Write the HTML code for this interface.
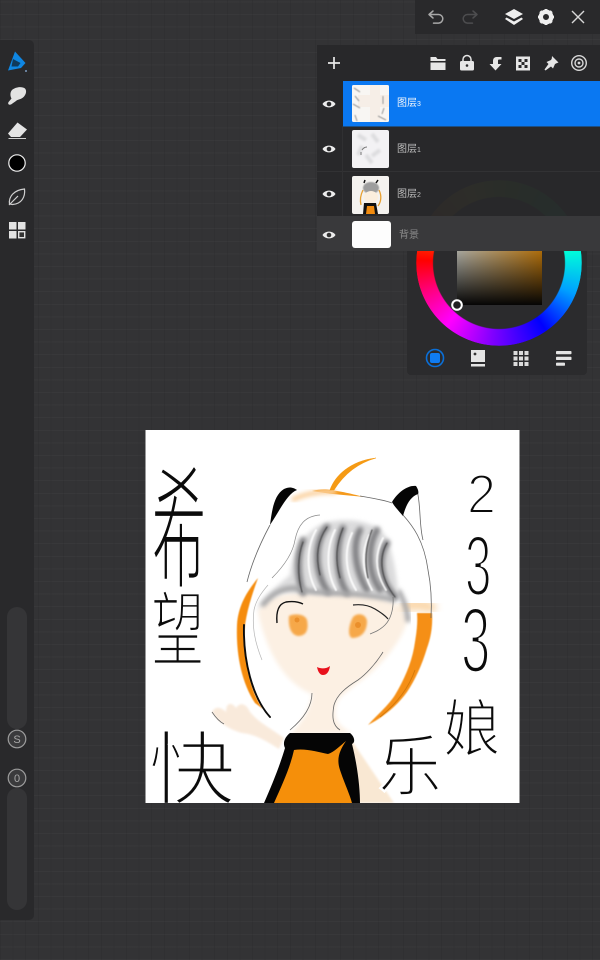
<!DOCTYPE html>
<html><head><meta charset="utf-8">
<style>
html,body{margin:0;padding:0;background:#333335}
#p{position:relative;width:600px;height:960px;overflow:hidden;background:#333335;font-family:"Liberation Sans","Noto Sans CJK SC",sans-serif}
#p>*{position:absolute}
.grid{inset:0;background-image:repeating-linear-gradient(0deg,rgba(255,255,255,.022) 0 1px,transparent 1px 12.6px),repeating-linear-gradient(90deg,rgba(0,0,0,.06) 0 1px,transparent 1px 12.6px)}
.wheel{left:416px;top:180px;width:166px;height:166px;border-radius:50%;background:conic-gradient(from 0deg,#7dff00 0deg,#00ff60 40deg,#00ffd8 80deg,#00a0ff 112deg,#0000ff 145deg,#8000ff 185deg,#ff00ff 220deg,#ff0080 248deg,#ff0000 272deg,#ff9000 310deg,#ffe000 335deg,#7dff00 360deg);-webkit-mask:radial-gradient(circle,transparent 0 65.5px,#000 66.5px 82.5px,transparent 83px);mask:radial-gradient(circle,transparent 0 65.5px,#000 66.5px 82.5px,transparent 83px)}
.lbl{color:#bdbdbd;font-size:10px;line-height:12px;white-space:nowrap}
.lbl small{font-size:7px}
</style></head><body>
<div id="p">
<div class="grid"></div>

<!-- sidebar -->
<div style="left:0;top:40px;width:34px;height:880px;background:#29292b;border-radius:0 5px 5px 0"></div>
<div style="left:7px;top:607px;width:20px;height:122px;background:#353537;border-radius:10px"></div>
<div style="left:7px;top:788px;width:20px;height:122px;background:#353537;border-radius:10px"></div>

<!-- colour panel -->
<div style="left:407px;top:170px;width:180px;height:205px;background:#2b2b2d;border-radius:4px"></div>
<div class="wheel"></div>
<div style="left:457px;top:250px;width:84.5px;height:55px;background:linear-gradient(to top,#050505,rgba(5,5,5,0)),linear-gradient(to right,#a9a9a1,#b06e0a)"></div>

<svg style="left:0;top:0" width="600" height="960" viewBox="0 0 600 960">
  <defs>
    <filter id="b05" x="-20%" y="-20%" width="140%" height="140%"><feGaussianBlur stdDeviation=".5"/></filter>
    <filter id="b1" x="-20%" y="-20%" width="140%" height="140%"><feGaussianBlur stdDeviation="1"/></filter>
    <filter id="b2" x="-30%" y="-30%" width="160%" height="160%"><feGaussianBlur stdDeviation="2.2"/></filter>
    <filter id="b4" x="-30%" y="-30%" width="160%" height="160%"><feGaussianBlur stdDeviation="4"/></filter>
    <clipPath id="cv"><rect x="145.5" y="430" width="374" height="373"/></clipPath>
  </defs>

  <!-- colour panel tabs -->
  <circle cx="457" cy="305" r="4.8" fill="#222" stroke="#fff" stroke-width="2"/>
  <circle cx="435" cy="358" r="8.5" fill="none" stroke="#0a6fd8" stroke-width="1.6"/>
  <rect x="430" y="353" width="10" height="10" rx="2" fill="#0f7cf2"/>
  <path d="M471 350h14v12h-14zM471 364h14v2.500h-14z" fill="#e4e4e4"/>
  <circle cx="475" cy="354" r="1.400" fill="#333"/>
  <g fill="#dcdcdc"><rect x="513.500" y="351" width="4" height="4"/><rect x="519" y="351" width="4" height="4"/><rect x="524.500" y="351" width="4" height="4"/><rect x="513.500" y="356.500" width="4" height="4"/><rect x="519" y="356.500" width="4" height="4"/><rect x="524.500" y="356.500" width="4" height="4"/><rect x="513.500" y="362" width="4" height="4"/><rect x="519" y="362" width="4" height="4"/><rect x="524.500" y="362" width="4" height="4"/></g>
  <g fill="#e4e4e4"><rect x="556" y="351" width="15.500" height="3.200" rx=".8"/><rect x="556" y="356.800" width="15.500" height="3.200" rx=".8"/><rect x="556" y="362.600" width="9" height="3.200" rx=".8"/></g>

  <!-- layer panel + top bar -->
  <rect x="317" y="45" width="283" height="171" fill="#28282a" fill-opacity=".975"/>
  <rect x="317" y="216" width="283" height="35" fill="#39393b"/>
  <rect x="343" y="81" width="257" height="45" fill="#0a78f2"/>
  <rect x="343" y="126" width="257" height="1" fill="#1b4f86"/>
  <path d="M317 171.500H600" stroke="#323234"/>
  <path d="M342.500 126V216" stroke="#303032"/>
  <rect x="415" y="0" width="185" height="34" fill="#29292b"/>

  <!-- top bar icons -->
  <g fill="none" stroke="#a8a8a8" stroke-width="1.500" stroke-linecap="round" stroke-linejoin="round">
    <path d="M433 11l-4 3.500 4 3.500M429.500 14.500h9a4.300 4.300 0 0 1 0 8.600h-5"/>
  </g>
  <g fill="none" stroke="#4d4d4f" stroke-width="1.500" stroke-linecap="round" stroke-linejoin="round">
    <path d="M473 11l4 3.500-4 3.500M476.500 14.500h-9a4.300 4.300 0 0 0 0 8.600h5"/>
  </g>
  <path d="M514 9l9 5-9 5-9-5z" fill="#efefef"/>
  <path d="M506.500 17.500l7.500 4 7.500-4 1.500 1.500-9 6-9-6z" fill="#efefef"/>
  <g>
    <circle cx="546" cy="17" r="5.200" fill="none" stroke="#efefef" stroke-width="4.400"/>
    <g stroke="#efefef" stroke-width="2.800"><path d="M546 9v3M546 22v3M538 17h3M551 17h3M540.300 11.300l2 2M549.700 20.700l2 2M540.300 22.700l2-2M549.700 13.300l2-2"/></g>
  </g>
  <path d="M572 11l12 12M584 11l-12 12" stroke="#d8d8d8" stroke-width="1.400" fill="none"/>

  <!-- layer header icons -->
  <path d="M334 57v12M328 63h12" stroke="#e8e8e8" stroke-width="1.700" fill="none"/>
  <path d="M430.500 57h5.500l1.500 2h8v2h-15zM430.500 62.500h15V70h-15z" fill="#e6e6e6"/>
  <path d="M463 62v-2.500a4 4 0 0 1 8 0V62" fill="none" stroke="#e6e6e6" stroke-width="1.500"/>
  <rect x="460" y="61" width="14" height="9.500" rx="1.500" fill="#e6e6e6"/>
  <circle cx="467" cy="65.500" r="1.300" fill="#2a2a2c"/>
  <path d="M501.500 57v2.500h-2.500a1 1 0 0 0-1 1V64h3.500l-6 6.500-6-6.500h3.500v-3.500a3.500 3.500 0 0 1 3.500-3.500z" fill="#e6e6e6"/>
  <rect x="516" y="56.500" width="14" height="14" fill="#e6e6e6"/>
  <g fill="#2a2a2c"><rect x="518.500" y="59" width="3" height="3"/><rect x="524.500" y="59" width="3" height="3"/><rect x="521.500" y="62" width="3" height="3"/><rect x="518.500" y="65" width="3" height="3"/><rect x="524.500" y="65" width="3" height="3"/></g>
  <path d="M552 56l6.500 6.500-2 .7-1.500.8-2 4.500-2-2-5.500 4-1-1 4-5.500-2-2 4.500-2 .8-1.500z" fill="#e6e6e6"/>
  <circle cx="579" cy="63" r="7.300" fill="none" stroke="#d8d8d8" stroke-width="1.400"/>
  <circle cx="579" cy="63" r="4" fill="none" stroke="#d8d8d8" stroke-width="1.400"/>
  <circle cx="579" cy="63" r="1.400" fill="#d8d8d8"/>

  <!-- eyes -->
  <g transform="translate(329,104)"><path d="M-6.500 0C-4 -4.500 4 -4.500 6.500 0C4 4.500 -4 4.500 -6.500 0Z" fill="#ededed"/><circle r="2.300" fill="#2a2a2c"/></g>
  <g transform="translate(329,149)"><path d="M-6.500 0C-4 -4.500 4 -4.500 6.500 0C4 4.500 -4 4.500 -6.500 0Z" fill="#ededed"/><circle r="2.300" fill="#2a2a2c"/></g>
  <g transform="translate(329,194)"><path d="M-6.500 0C-4 -4.500 4 -4.500 6.500 0C4 4.500 -4 4.500 -6.500 0Z" fill="#ededed"/><circle r="2.300" fill="#2a2a2c"/></g>
  <g transform="translate(329,235)"><path d="M-6.500 0C-4 -4.500 4 -4.500 6.500 0C4 4.500 -4 4.500 -6.500 0Z" fill="#ededed"/><circle r="2.300" fill="#333"/></g>

  <!-- thumbnails -->
  <rect x="352" y="85" width="37" height="37" rx="1.500" fill="#f8f6f3"/>
  <path d="M358 95h12v-10h10v10h9v12h-9v15h-10v-15h-12z" fill="#f5ece4" fill-opacity=".8"/>
  <g filter="url(#b05)" stroke="#9a9a9a" stroke-width="1.100" fill="none"><path d="M354 88l6 4M355 96l4 5M353 104l7 4M355 115l2 6M383 96v8M384 108l-2 6M378 116l8 4"/></g>
  <rect x="352" y="130" width="37" height="38" rx="2" fill="#f3f2f4"/>
  <g filter="url(#b1)" stroke="#dddddf" stroke-width="4" fill="none"><path d="M358 135l8 5M372 134l6 8M362 146l-4 9M380 150l-8 6M366 155l6 8"/></g>
  <path d="M362 150c2-3 4-3 5-3M361 152l0 3" stroke="#777" fill="none"/>
  <rect x="352" y="176" width="37" height="38" rx="2" fill="#f4f2ef"/>
  <ellipse cx="371" cy="188" rx="8" ry="6" fill="#9d9d9d" filter="url(#b05)"/>
  <ellipse cx="371" cy="197" rx="7" ry="6" fill="#fbeedd"/>
  <path d="M363 190c-3 6-3 11-2 15M379 190c3 6 2 12-1 16" stroke="#e8a030" stroke-width="1.300" fill="none"/>
  <path d="M364 203l-1 11h15l-2-11z" fill="#111"/><path d="M367 206l-1 8h9l-1-8z" fill="#f28c10"/>
  <path d="M365 180l-1 3M378 180l-2 3" stroke="#111" stroke-width="1.500"/>
  <rect x="352" y="221" width="39" height="27" rx="3" fill="#fdfdfd"/>

  <!-- left toolbar icons -->
  <path d="M15 51.500L25.500 63 21 68 8 70.500z" fill="#0f86e2"/>
  <path d="M13 59l7.500 4-2.500 3.500-6.500 0z" fill="#103a5c"/>
  <circle cx="26" cy="71" r="1" fill="#7d9bc0"/>
  <path d="M12 90c3-3 10-4 13-1.500 2.500 2.500 .5 8-3.500 10-2 1-4 1-5.500 2.500l-5 3.500c-3 1-3.500-1.500-2-3l2.500-3c-1.500-2.500-1.500-6.500 .5-8.500z" fill="#e2e2e2"/>
  <path d="M17.500 122.500L27 129.500 20 137H11L8 133.500z" fill="#e4e4e4"/>
  <path d="M8.500 138.500H26" stroke="#cfcfcf" stroke-width="1" fill="none"/>
  <circle cx="17" cy="163" r="8.200" fill="#000" stroke="#efefef" stroke-width="1.200"/>
  <path d="M9.500 204c-1-7 4-14 15-15 1 8-3 15-12 15.500zM9 205l9-9" fill="none" stroke="#cfcfcf" stroke-width="1.200"/>
  <g fill="#e2e2e2"><rect x="9" y="222" width="7.500" height="7.500"/><rect x="18" y="222" width="7.500" height="7.500"/><rect x="9" y="231" width="7.500" height="7.500"/></g>
  <rect x="18.700" y="231.700" width="6" height="6" fill="#333" stroke="#e2e2e2" stroke-width="1.400"/>
  <circle cx="17" cy="739" r="8.800" fill="#3a3a3c" stroke="#9c9c9c" stroke-width="1.200"/>
  <text x="17" y="743" font-size="11" fill="#a8a8a8" text-anchor="middle" font-family="Liberation Sans">S</text>
  <circle cx="17" cy="778" r="8.800" fill="#3a3a3c" stroke="#9c9c9c" stroke-width="1.200"/>
  <text x="17" y="782" font-size="11" fill="#a8a8a8" text-anchor="middle" font-family="Liberation Sans">0</text>

  <!-- canvas -->
  <rect x="145.500" y="430" width="374" height="373" fill="#fff"/>
  <g clip-path="url(#cv)">
    <!-- face & neck -->
    <path d="M258 612C262 596 290 590 330 592C370 592 402 600 408 618C404 636 390 655 372 672C360 682 345 692 338 700C333 712 333 725 353 733L290 735C300 725 310 710 312 694C290 686 268 660 258 612Z" fill="#fcf0e3" filter="url(#b2)"/>
    <path d="M348 735L394 803H354Z" fill="#f9e8d3" filter="url(#b1)"/>
    <!-- hand and arm -->
    <path d="M212 712C216 705 222 708 226 712C226 702 232 702 236 708C240 702 246 703 250 712C258 722 270 728 284 738L279 749C262 738 252 734 242 733C230 730 218 722 212 712Z" fill="#f9eadb" filter="url(#b1)"/>
    <!-- left strand -->
    <path d="M258 578C248 590 238 605 237 625C236 650 240 680 255 703L263 709C252 695 247 670 244 640C244 620 250 600 258 578Z" fill="#f58c0c" filter="url(#b05)"/>
    <path d="M244 625C243 660 252 697 270 717" fill="none" stroke="#0c0c0c" stroke-width="1.900" stroke-linecap="round"/>
    <!-- right strand -->
    <path d="M417 613L432 613C433 628 430 640 427 648C422 665 415 680 407 692C397 706 382 718 368 725C378 714 388 706 395 695C404 680 411 664 414 648C416 636 418 625 417 613Z" fill="#f58f12" filter="url(#b05)"/>
    <path d="M402 606C416 604 428 604 434 610" stroke="#f9d3a2" stroke-width="10" fill="none" filter="url(#b4)"/>
    <path d="M398 590C404 600 408 612 408 622" stroke="#a8a8aa" stroke-width="5" fill="none" filter="url(#b2)"/>
    <path d="M415 670C408 690 395 705 380 717" stroke="#d47a0a" stroke-width="1" fill="none"/>
    <!-- head top orange -->
    <path d="M312 491C320 489 326 489 330 490C345 492 352 494 364 497C345 495 328 494 312 491Z" fill="#f59a1c"/>
    <path d="M292 500c12-6 28-9 44-8" stroke="#fbd3a3" stroke-width="5" fill="none" filter="url(#b2)"/>
    <path d="M330 490C335 476 350 461 376 458C358 463 344 474 334 490Z" fill="#f59a14" stroke="#f59a14" stroke-width=".6"/>
    <!-- outlines -->
    <g fill="none" stroke="#666" stroke-width=".8">
      <path d="M270 525C262 540 252 562 247 582"/>
      <path d="M360 496C372 498 384 500 392 503"/>
      <path d="M403 515C412 525 424 540 428 570C431 585 432 600 431 618"/>
      <path d="M417 490C421 505 419 525 423 540"/>
      <path d="M383 652C375 665 365 675 358 680C345 688 337 695 334 705C332 716 332 725 340 730"/>
      <path d="M312 693C312 708 302 720 290 730"/>
      <path d="M212 712C216 718 220 722 224 724"/>
    </g>
    <!-- ears -->
    <path d="M270 525C272 510 274 495 284 489C290 486 294 488 297 490C287 494 280 510 270 525Z" fill="#050505"/>
    <path d="M392 502C398 492 408 485 416 486C418 489 419 492 418 494C410 497 406 505 403 516C398 510 394 506 392 502Z" fill="#050505"/>
    <!-- grey hair -->
    <path d="M256 612C262 596 280 584 290 575C292 555 300 535 322 524C345 516 378 520 388 540C394 560 398 580 398 600C380 598 360 592 340 594C320 596 296 592 280 592C270 596 262 604 256 612Z" fill="#dcdcdd" filter="url(#b2)"/>
    <g fill="none" stroke="#808083" stroke-width="6.500" stroke-linecap="round" filter="url(#b2)">
      <path d="M303 540C297 555 297 575 303 593"/>
      <path d="M327 527C315 540 313 570 328 592"/>
      <path d="M343 528C336 545 335 575 347 593"/>
      <path d="M360 530C352 545 355 570 367 590"/>
      <path d="M377 530C368 545 367 572 380 590"/>
      <path d="M387 543C378 555 379 580 395 597"/>
    </g>
    <path d="M262 606C270 596 280 588 295 588C320 596 350 590 395 600" fill="none" stroke="#a4a4a6" stroke-width="5" filter="url(#b2)"/>
    <g fill="none" stroke="#fff" stroke-width="2" stroke-linecap="round" filter="url(#b05)" opacity=".85">
      <path d="M316 530C306 548 306 572 316 590"/>
      <path d="M335 530C326 548 326 572 336 590"/>
      <path d="M352 533C344 550 345 572 356 590"/>
      <path d="M369 535C361 552 362 572 372 590"/>
      <path d="M383 538C374 555 375 572 386 590"/>
    </g>
    <g fill="none" stroke="#3c3c3e" stroke-width="1" stroke-linecap="round" filter="url(#b05)">
      <path d="M343 528C336 545 335 560 340 578"/>
      <path d="M327 527C318 540 315 555 320 575"/>
      <path d="M387 543C380 555 378 575 395 597"/>
      <path d="M372 530C366 545 364 560 368 578"/>
      <path d="M303 542C298 555 297 575 302 592"/>
    </g>
    <path d="M320 515C305 516 298 525 295 540C293 552 285 565 272 578" fill="none" stroke="#888" stroke-width=".7"/>
    <path d="M268 585C262 592 256 600 254 610C252 625 254 640 262 660" fill="none" stroke="#b5b5b5" stroke-width=".7"/>
    <path d="M393 597C394 610 390 620 385 625C380 630 375 632 370 634" fill="none" stroke="#777" stroke-width=".8"/>
    <!-- brows / eyes / mouth -->
    <path d="M277 623C276 612 278 604 286 602C293 601 299 602 303 604" fill="none" stroke="#111" stroke-width="1.400"/>
    <path d="M353 605C362 604 370 606 375 609C380 612 385 615 388 619" fill="none" stroke="#222" stroke-width="1.200"/>
    <path d="M289 616C295 613 305 614 307 620C309 630 306 636 298 636C291 635 288 627 289 616Z" fill="#f6a84a" filter="url(#b1)"/>
    <path d="M353 617C358 612 366 614 367 621C367 632 361 638 352 638C347 636 349 624 353 617Z" fill="#f6a84a" filter="url(#b1)"/>
    <circle cx="297" cy="620" r="2.500" fill="#e58520" fill-opacity=".7"/><circle cx="358" cy="625" r="3" fill="#e58520" fill-opacity=".7"/>
    <path d="M317 667C321 669 326 669 330 666C329 673 326 675 323 675C320 675 318 672 317 667Z" fill="#e8111c"/>
    <!-- dress -->
    <path d="M264 803C272 785 280 765 285 748C282 742 286 736 290 733C305 733 335 733 350 733C354 736 356 742 352 744C358 768 360 790 360 803Z" fill="#050505"/>
    <path d="M274 803C282 785 290 768 294 750C305 748 318 752 328 754C334 752 340 746 346 741C340 750 336 758 340 770C344 782 350 795 352 803Z" fill="#f58f0a"/>
    <!-- handwritten lettering -->
    <g font-family="'Noto Sans CJK SC','WenQuanYi Zen Hei',sans-serif" fill="#0b0b0b" stroke="#fff">
      <text transform="translate(151,578) scale(.62,1.5)" font-size="90" stroke-width="3">希</text>
      <text transform="translate(151,659) scale(.62,.95)" font-size="86" stroke-width="3">望</text>
      <text transform="translate(148,798) scale(1,.92)" font-size="88" stroke-width="3.400">快</text>
      <text transform="translate(378,790) scale(.78,.82)" font-size="82" stroke-width="3">乐</text>
      <text transform="translate(443,751) scale(.74,.8)" font-size="78" stroke-width="2.700">娘</text>
      <g font-family="'Liberation Sans',sans-serif">
        <text transform="translate(467,513) scale(1,1.06)" font-size="52" stroke-width="2">2</text>
        <text transform="translate(465,595) scale(.72,1.3)" font-size="66" stroke-width="2.400">3</text>
        <text transform="translate(461,672) scale(.8,1.4)" font-size="66" stroke-width="2.400">3</text>
      </g>
    </g>
  </g>
</svg>

<!-- layer labels -->
<div class="lbl" style="left:397px;top:98px;color:#f2f6fb">图层<small>3</small></div>
<div class="lbl" style="left:397px;top:144px">图层<small>1</small></div>
<div class="lbl" style="left:397px;top:189px">图层<small>2</small></div>
<div class="lbl" style="left:399px;top:230px;color:#8c8c8c">背景</div>
</div>
</body></html>
